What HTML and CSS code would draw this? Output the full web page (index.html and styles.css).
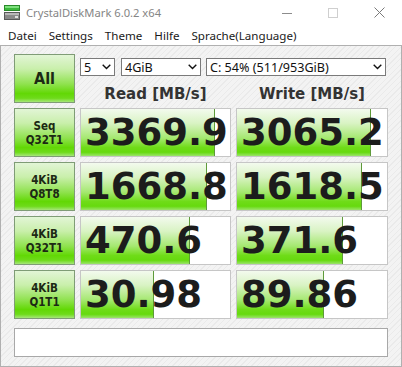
FILE: index.html
```html
<!DOCTYPE html>
<html>
<head>
<meta charset="utf-8">
<link rel="stylesheet" href="styles.css">
</head>
<body>
<div class="window">
  <div class="titlebar">
    <svg class="app-icon" width="16" height="15" viewBox="0 0 16 15">
      <rect x="0.5" y="0.5" width="15" height="5" fill="#3cb83c" stroke="#2a8a2a"/>
      <rect x="1" y="1" width="14" height="2" fill="#7ee07e"/>
      <rect x="0.5" y="7.5" width="15" height="7" fill="#8a8a8a" stroke="#5a5a5a"/>
      <rect x="1" y="8" width="14" height="2" fill="#b8b8b8"/>
      <rect x="11" y="11" width="3" height="2" fill="#e0e0e0"/>
    </svg>
    <span class="title">CrystalDiskMark 6.0.2 x64</span>
    <div class="controls">
      <span class="ctl"><svg width="10" height="10" viewBox="0 0 10 10"><path d="M0 5.5H10" stroke="#8c8c8c" stroke-width="1"/></svg></span>
      <span class="ctl"><svg width="10" height="10" viewBox="0 0 10 10"><rect x="0.5" y="0.5" width="9" height="9" fill="none" stroke="#cfcfcf"/></svg></span>
      <span class="ctl"><svg width="11" height="11" viewBox="0 0 11 11"><path d="M0.5 0.5L10.5 10.5M10.5 0.5L0.5 10.5" stroke="#7a7a7a" stroke-width="1"/></svg></span>
    </div>
  </div>
  <div class="menubar">
    <span class="menu">Datei</span>
    <span class="menu">Settings</span>
    <span class="menu">Theme</span>
    <span class="menu">Hilfe</span>
    <span class="menu">Sprache(Language)</span>
  </div>
  <div class="client">
    <div class="grid">
      <div class="label all">All</div>
      <div class="top">
        <div class="selects">
          <div class="select s1"><span>5</span><svg class="chev" width="9" height="6" viewBox="0 0 9 6"><path d="M0.7 0.8L4.5 4.6L8.3 0.8" fill="none" stroke="#111" stroke-width="1.4"/></svg></div>
          <div class="select s2"><span>4GiB</span><svg class="chev" width="9" height="6" viewBox="0 0 9 6"><path d="M0.7 0.8L4.5 4.6L8.3 0.8" fill="none" stroke="#111" stroke-width="1.4"/></svg></div>
          <div class="select s3"><span>C: 54% (511/953GiB)</span><svg class="chev" width="9" height="6" viewBox="0 0 9 6"><path d="M0.7 0.8L4.5 4.6L8.3 0.8" fill="none" stroke="#111" stroke-width="1.4"/></svg></div>
        </div>
        <div class="headers">
          <div class="head">Read [MB/s]</div>
          <div class="head">Write [MB/s]</div>
        </div>
      </div>

      <div class="label"><span>Seq</span><span>Q32T1</span></div>
      <div class="value"><div class="fill" style="width:134px"></div><span class="num">3369.9</span></div>
      <div class="value"><div class="fill" style="width:134px"></div><span class="num">3065.2</span></div>

      <div class="label"><span>4KiB</span><span>Q8T8</span></div>
      <div class="value"><div class="fill" style="width:126px"></div><span class="num">1668.8</span></div>
      <div class="value"><div class="fill" style="width:125px"></div><span class="num">1618.5</span></div>

      <div class="label"><span>4KiB</span><span>Q32T1</span></div>
      <div class="value"><div class="fill" style="width:109px"></div><span class="num">470.6</span></div>
      <div class="value"><div class="fill" style="width:106px"></div><span class="num">371.6</span></div>

      <div class="label"><span>4KiB</span><span>Q1T1</span></div>
      <div class="value"><div class="fill" style="width:73px"></div><span class="num">30.98</span></div>
      <div class="value"><div class="fill" style="width:87px"></div><span class="num">89.86</span></div>

      <div class="comment"></div>
    </div>
  </div>
</div>
</body>
</html>
```

FILE: styles.css
```css
html, body {
  margin: 0;
  padding: 0;
}
body {
  width: 402px;
  height: 367px;
  overflow: hidden;
  background: #ffffff;
  font-family: "Noto Sans", "Open Sans", sans-serif;
}
.window {
  width: 402px;
  height: 367px;
  display: flex;
  flex-direction: column;
}
.titlebar {
  height: 25px;
  display: flex;
  align-items: center;
  flex: none;
}
.app-icon {
  margin-left: 4px;
  flex: none;
}
.title {
  margin-left: 6px;
  font-size: 11.2px;
  color: #858585;
  white-space: nowrap;
}
.controls {
  margin-left: auto;
  display: flex;
  height: 25px;
}
.ctl {
  width: 46px;
  display: flex;
  align-items: center;
  justify-content: center;
}
.menubar {
  height: 20px;
  display: flex;
  align-items: center;
  font-size: 11.6px;
  color: #1a1a1a;
  flex: none;
  padding-left: 2px;
}
.menu {
  padding: 0 6px;
  white-space: nowrap;
}
.client {
  flex: 1;
  box-sizing: border-box;
  border: 1px solid #b0b0b0;
  background: repeating-linear-gradient(135deg, #f3f3f3 0 3px, #eaeaea 3px 4px);
  padding: 8px 0 0 13px;
}
.grid {
  display: grid;
  grid-template-columns: 61px 151px 152px;
  grid-template-rows: 49px 49px 49px 49px 49px 29px;
  column-gap: 5px;
  row-gap: 5px;
}
.label {
  box-sizing: border-box;
  border: 1px solid #7f9c76;
  background: linear-gradient(#e2f5d6 0%, #c9efab 30%, #8fe24e 62%, #62d805 82%, #6edb1a 92%, #a6e67a 100%);
  display: flex;
  flex-direction: column;
  align-items: center;
  justify-content: center;
  font-family: "DejaVu Sans Condensed", "DejaVu Sans", sans-serif;
  font-weight: bold;
  font-size: 11.5px;
  line-height: 14px;
  color: #1c2914;
}
.label.all {
  font-size: 16px;
}
.top {
  grid-column: 2 / 4;
  display: flex;
  flex-direction: column;
}
.selects {
  display: flex;
  margin-top: 4px;
  height: 18px;
}
.select {
  box-sizing: border-box;
  height: 18px;
  border: 1px solid #7a7a7a;
  background: #ffffff;
  display: flex;
  align-items: center;
  padding: 0 3px 0 3px;
  font-size: 12.6px;
  color: #111;
  white-space: nowrap;
}
.select .chev {
  margin-left: auto;
  flex: none;
}
.s1 { width: 35px; }
.s2 { width: 80px; margin-left: 6px; }
.s3 { width: 180px; margin-left: 5px; padding-right: 3px; }
.headers {
  display: grid;
  grid-template-columns: 151px 152px;
  column-gap: 5px;
  padding-top: 9px;
}
.head {
  text-align: center;
  font-family: "DejaVu Sans", sans-serif;
  font-weight: bold;
  font-size: 15px;
  line-height: 18px;
  color: #333333;
  white-space: nowrap;
}
.value {
  position: relative;
  box-sizing: border-box;
  border: 1px solid #c6c6c6;
  background: #ffffff;
  overflow: hidden;
}
.fill {
  position: absolute;
  left: 0;
  top: 0;
  bottom: 0;
  box-sizing: border-box;
  border-right: 1px solid #5e9a3a;
  background: linear-gradient(#f3faee 0%, #d9f3c4 30%, #a5e870 62%, #6fdc18 82%, #66da0e 92%, #9be46a 100%);
}
.num {
  position: relative;
  display: block;
  padding-left: 4px;
  font-family: "DejaVu Sans", sans-serif;
  font-weight: bold;
  font-size: 37px;
  line-height: 47px;
  color: #1c1c1c;
  white-space: nowrap;
}
.comment {
  grid-column: 1 / 4;
  margin-top: 4px;
  height: 29px;
  box-sizing: border-box;
  border: 1px solid #a8a8a8;
  background: #ffffff;
}
```
